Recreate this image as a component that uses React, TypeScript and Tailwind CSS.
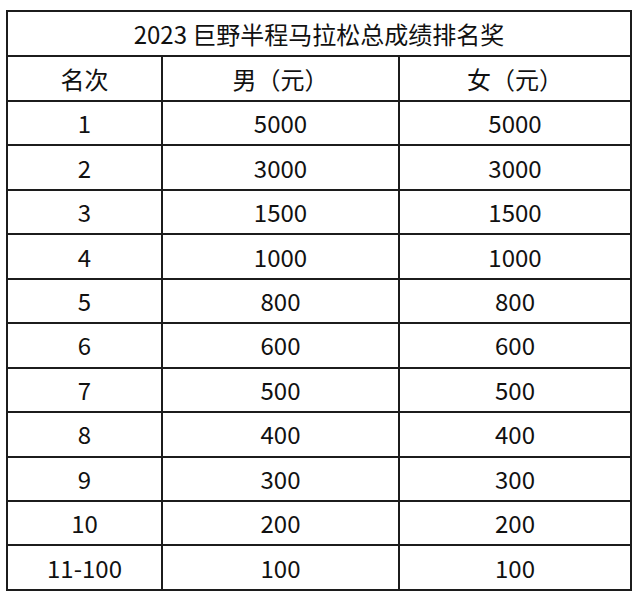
const rows: [string, string, string][] = [
  ["1", "5000", "5000"],
  ["2", "3000", "3000"],
  ["3", "1500", "1500"],
  ["4", "1000", "1000"],
  ["5", "800", "800"],
  ["6", "600", "600"],
  ["7", "500", "500"],
  ["8", "400", "400"],
  ["9", "300", "300"],
  ["10", "200", "200"],
  ["11-100", "100", "100"],
];

const cell = "border-2 border-[#1c1c1c] text-center align-middle p-0";

export default function App() {
  return (
    <div
      className="w-[640px] h-[598px] bg-white pt-[10px] pl-[6px] text-[24px] text-[#111]"
      style={{ fontFamily: '"Noto Sans CJK SC", "Noto Sans", sans-serif' }}
    >
      <table className="border-collapse w-[624px] table-fixed leading-none">
        <colgroup>
          <col className="w-[155px]" />
          <col className="w-[237px]" />
          <col className="w-[232px]" />
        </colgroup>
        <tbody>
          <tr className="h-[45px]">
            <td colSpan={3} className={cell}>
              2023 巨野半程马拉松总成绩排名奖
            </td>
          </tr>
          <tr className="h-[45px]">
            <td className={cell}>名次</td>
            <td className={cell}>男（元）</td>
            <td className={cell}>女（元）</td>
          </tr>
          {rows.map(([rank, men, women]) => (
            <tr key={rank} className="h-[44.45px]">
              <td className={cell}>{rank}</td>
              <td className={cell}>{men}</td>
              <td className={cell}>{women}</td>
            </tr>
          ))}
        </tbody>
      </table>
    </div>
  );
}
